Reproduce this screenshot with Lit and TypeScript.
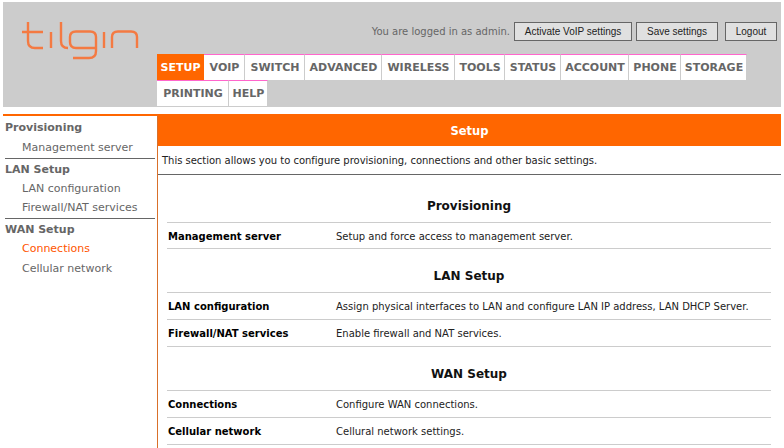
import { LitElement, html, css } from "lit";
import { customElement } from "lit/decorators.js";

const tabs1: [string, number][] = [["SETUP",47],["VOIP",41],["SWITCH",60],["ADVANCED",77],["WIRELESS",73],["TOOLS",50],["STATUS",56],["ACCOUNT",68],["PHONE",52],["STORAGE",66]];
const tabs2: [string, number][] = [["PRINTING",72],["HELP",39]];
const side = [
  { h: "Provisioning", items: ["Management server"] },
  { h: "LAN Setup", items: ["LAN configuration","Firewall/NAT services"] },
  { h: "WAN Setup", items: ["Connections","Cellular network"] },
];
const sections = [
  { h: "Provisioning", rows: [["Management server","Setup and force access to management server."]] },
  { h: "LAN Setup", rows: [["LAN configuration","Assign physical interfaces to LAN and configure LAN IP address, LAN DHCP Server."],["Firewall/NAT services","Enable firewall and NAT services."]] },
  { h: "WAN Setup", rows: [["Connections","Configure WAN connections."],["Cellular network","Cellural network settings."]] },
];

@customElement("app-root")
export class AppRoot extends LitElement {
  static styles = css`
    :host { display:block; width:784px; height:448px; overflow:hidden; background:#fff; font-family:"DejaVu Sans",Verdana,sans-serif; box-sizing:border-box; padding:2px 3px 0 3px; }
    .header { height:105px; background:#ccc; display:flex; }
    .logo { width:154px; flex:none; padding:20px 0 0 18px; box-sizing:border-box; }
    .right { flex:1; display:flex; flex-direction:column; }
    .top { height:52px; box-sizing:border-box; display:flex; justify-content:flex-end; align-items:flex-start; padding:20px 4px 0 0; font-size:10px; color:#666; }
    .login { line-height:19px; margin-right:4px; }
    .btn { height:19px; box-sizing:border-box; border:1px solid #666; background:#e0e0e0; color:#222; font:10px/16px "Liberation Sans",Arial,sans-serif; padding:0; margin:0 0 0 4px; white-space:nowrap; }
    .btn.first { margin-left:0; }
    .btn.last { margin-left:7px; }
    .tabrow { display:flex; height:26px; }
    .tab { box-sizing:border-box; height:26px; background:#fff; border-top:1px solid #f6c; border-right:1px solid #ccc; color:#666; font-size:11px; font-weight:bold; text-align:center; line-height:25px; white-space:nowrap; padding-left:1px; }
    .tab.active { background:#f60; color:#fff; border-top-color:#f60; border-right-color:#f60; }
    .main { display:flex; margin-top:7px; }
    .sidebar { width:155px; flex:none; box-sizing:border-box; border-top:2px solid #f60; border-right:1px solid #d9702a; height:334px; padding-left:2px; padding-top:2px; }
    .sh { font-size:11px; font-weight:bold; color:#666; line-height:20px; }
    .si { font-size:11px; color:#666; padding-left:17px; line-height:19.500px; }
    .si.on { color:#f50; }
    .group { margin-right:2px; }
    .group + .group { border-top:1px solid #666; }
    .group + .group .sh { padding-top:1px; margin-bottom:-1px; }
    .group:last-child .si:last-child { padding-top:1px; }
    .content { flex:1; min-width:0; }
    .title { background:#f60; color:#fff; text-align:center; font-weight:bold; font-size:11.500px; line-height:35px; height:32px; }
    .intro { font-size:10px; letter-spacing:-0.02px; color:#222; line-height:29px; height:28px; border-bottom:1px solid #666; padding-left:4px; }
    .sec { margin:0 10px 0 9px; }
    .sec.first { padding-top:4px; }
    .sec h2 { margin:0; text-align:center; font-size:12px; font-weight:bold; color:#111; height:43px; line-height:54px; border-bottom:1px solid #ccc; }
    .row { display:flex; height:26px; border-bottom:1px solid #ccc; font-size:10px; line-height:27px; color:#222; }
    .sec.first .row { height:25px; }
    .row b { width:169px; flex:none; padding-left:1px; box-sizing:border-box; color:#000; }
  `;

  render() {
    return html`
      <div class="header">
        <div class="logo">
          <svg width="120" height="42" viewBox="0 0 120 42" fill="none" stroke="#f47a42" stroke-width="2.4">
            <path d="M7 0V19Q7 26 14 26H22M1 10H22"/>
            <path d="M30 10V26"/>
            <path d="M40 0V19Q40 26 47 26"/>
            <path d="M75 26H55Q49 26 49 20V15Q49 9.500 55 9.500H69Q75 9.500 75 15V29Q75 36 68 36H52"/>
            <path d="M83 10V26"/>
            <path d="M91 26V15Q91 9.500 97 9.500H110Q116 9.500 116 15V26"/>
          </svg>
        </div>
        <div class="right">
          <div class="top">
            <span class="login">You are logged in as admin.</span>
            <button class="btn first" style="width:118px">Activate VoIP settings</button>
            <button class="btn" style="width:82px">Save settings</button>
            <button class="btn last" style="width:52px">Logout</button>
          </div>
          <div class="tabrow">${tabs1.map(([t, w], i) => html`<div class="tab ${i === 0 ? "active" : ""}" style="width:${w}px">${t}</div>`)}</div>
          <div class="tabrow">${tabs2.map(([t, w]) => html`<div class="tab" style="width:${w}px">${t}</div>`)}</div>
        </div>
      </div>
      <div class="main">
        <div class="sidebar">
          ${side.map(g => html`<div class="group"><div class="sh">${g.h}</div>${g.items.map(i => html`<div class="si ${i === "Connections" ? "on" : ""}">${i}</div>`)}</div>`)}
        </div>
        <div class="content">
          <div class="title">Setup</div>
          <div class="intro">This section allows you to configure provisioning, connections and other basic settings.</div>
          ${sections.map((s, n) => html`<div class="sec ${n === 0 ? "first" : ""}"><h2>${s.h}</h2>${s.rows.map(r => html`<div class="row"><b>${r[0]}</b><span>${r[1]}</span></div>`)}</div>`)}
        </div>
      </div>
    `;
  }
}
